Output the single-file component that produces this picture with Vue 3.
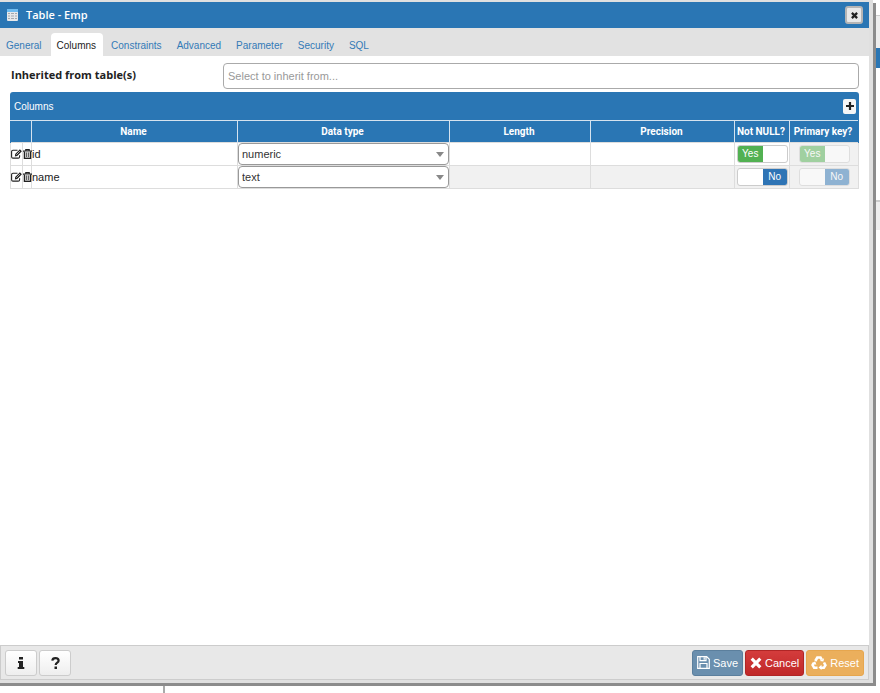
<script setup>
import { ref } from 'vue'

const tabs = ['General', 'Columns', 'Constraints', 'Advanced', 'Parameter', 'Security', 'SQL']
const active = ref('Columns')
const inherit = ref('')
const rows = ref([
  { name: 'id', type: 'numeric', sized: true, notNull: true, primary: true },
  { name: 'name', type: 'text', sized: false, notNull: false, primary: false },
])
</script>

<template>
  <div class="desktop">
    <main class="dialog">
      <header class="titlebar">
        <svg class="table-icon" viewBox="0 0 11 12" aria-hidden="true">
          <rect x="0" y="0" width="11" height="12" rx="1" fill="#e6e8ea" />
          <rect x="0" y="0" width="11" height="3" fill="#6fbcf0" />
          <path d="M1 4.500h2M4 4.500h3M8 4.500h2M1 7h2M4 7h3M8 7h2M1 9.500h2M4 9.500h3M8 9.500h2" stroke="#a3a9ae" />
        </svg>
        <h1>Table - Emp</h1>
        <button class="close" type="button" aria-label="Close">
          <svg viewBox="0 0 8 8" aria-hidden="true"><path d="M1 1l6 6M7 1l-6 6" stroke="#222" stroke-width="2.6" /></svg>
        </button>
      </header>

      <nav class="tabs">
        <a v-for="t in tabs" :key="t" href="#" :class="{ active: t === active }" @click.prevent="active = t">{{ t }}</a>
      </nav>

      <section class="content">
        <div class="field">
          <label for="inherit">Inherited from table(s)</label>
          <input id="inherit" v-model="inherit" type="text" placeholder="Select to inherit from..." />
        </div>

        <div class="grid">
          <div class="grid-head">
            <h2>Columns</h2>
            <button class="add" type="button" aria-label="Add column">
              <svg viewBox="0 0 8 8" aria-hidden="true"><path d="M4 0v8M0 4h8" stroke="#222" stroke-width="2.2" /></svg>
            </button>
          </div>
          <table>
            <colgroup>
              <col class="c-edit" /><col class="c-delete" /><col /><col class="c-type" />
              <col class="c-len" /><col class="c-prec" /><col class="c-null" /><col class="c-key" />
            </colgroup>
            <thead>
              <tr>
                <th colspan="2"></th>
                <th>Name</th>
                <th>Data type</th>
                <th>Length</th>
                <th>Precision</th>
                <th>Not NULL?</th>
                <th>Primary key?</th>
              </tr>
            </thead>
            <tbody>
              <tr v-for="r in rows" :key="r.name">
                <td class="icon-cell">
                  <button type="button" :aria-label="'Edit ' + r.name">
                    <svg width="11" height="10" viewBox="0 0 11 10" aria-hidden="true">
                      <path d="M6.500 1.300H2A1.400 1.400 0 0 0 .6 2.700v5A1.400 1.400 0 0 0 2 9.100h5.200a1.400 1.400 0 0 0 1.400-1.400V6.200" fill="none" stroke="#222" stroke-width="1.100" />
                      <path d="M3.900 7.400l.3-2.400L8.900.3l2 1.900L6.200 7z" fill="#222" />
                      <path d="M5.300 5.700L8.900 2.100" stroke="#fff" stroke-width=".7" />
                    </svg>
                  </button>
                </td>
                <td class="icon-cell">
                  <button type="button" :aria-label="'Delete ' + r.name">
                    <svg width="9" height="10" viewBox="0 0 9 10" aria-hidden="true">
                      <path d="M0 2.100h9M2.800 2V.7h3.400V2" fill="none" stroke="#222" stroke-width="1.200" />
                      <path d="M1.400 2.500v6.800h6.200V2.500" fill="#ccc" stroke="#222" stroke-width="1.300" />
                      <path d="M3.500 3.500v4.500M5.500 3.500v4.500" stroke="#444" stroke-width=".8" />
                    </svg>
                  </button>
                </td>
                <td>{{ r.name }}</td>
                <td>
                  <div class="select">
                    <select v-model="r.type" :aria-label="'Data type of ' + r.name">
                      <option>numeric</option>
                      <option>text</option>
                    </select>
                  </div>
                </td>
                <td :class="{ off: !r.sized }"></td>
                <td :class="{ off: !r.sized }"></td>
                <td :class="{ off: !r.sized }">
                  <label class="switch">
                    <input v-model="r.notNull" type="checkbox" :aria-label="r.name + ' not null'" />
                    <span class="yes">{{ r.notNull ? 'Yes' : '' }}</span>
                    <span class="no">{{ r.notNull ? '' : 'No' }}</span>
                  </label>
                </td>
                <td class="off key">
                  <label class="switch disabled">
                    <input v-model="r.primary" type="checkbox" disabled :aria-label="r.name + ' primary key'" />
                    <span class="yes">{{ r.primary ? 'Yes' : '' }}</span>
                    <span class="no">{{ r.primary ? '' : 'No' }}</span>
                  </label>
                </td>
              </tr>
            </tbody>
          </table>
        </div>
      </section>

      <footer class="footer">
        <button class="btn plain" type="button" aria-label="Information">
          <svg width="8" height="12" viewBox="0 0 8 12" aria-hidden="true">
            <path d="M2 0h4v2.500H2zM1 4h5v6h1.300v2H.7v-2H2V6H1z" fill="#222" />
          </svg>
        </button>
        <button class="btn plain" type="button" aria-label="Help">
          <svg width="9" height="12" viewBox="0 0 9 12" aria-hidden="true">
            <path d="M1.300 3.700C1.500 2 2.700 1.200 4.400 1.200c1.900 0 3.200 1 3.200 2.500C7.600 5.700 4.700 5.600 4.700 8" fill="none" stroke="#222" stroke-width="2.200" />
            <path d="M3.500 9.500h2.500V12H3.500z" fill="#222" />
          </svg>
        </button>
        <span class="spacer"></span>
        <button class="btn save" type="button">
          <svg width="13" height="13" viewBox="0 0 13 13" fill="none" stroke="#fff" stroke-width="1.200" aria-hidden="true">
            <path d="M.7.7h9l2.600 2.600v9H.7zM3 .7v4h6v-4M3 12.300V7.500h7v4.800" /><path d="M7.200 1.200v2.500" />
          </svg>
          Save
        </button>
        <button class="btn cancel" type="button">
          <svg width="12" height="12" viewBox="0 0 12 12" aria-hidden="true"><path d="M1.700 1.700l8.600 8.600M10.300 1.700l-8.600 8.600" stroke="#fff" stroke-width="3.200" /></svg>
          Cancel
        </button>
        <button class="btn reset" type="button">
          <svg width="16" height="14" viewBox="0 0 16 14" fill="none" stroke="#fff" stroke-width="2.600" aria-hidden="true">
            <path d="M4.300 5L6.300 1.500h3.200l1.300 2.200M13 6.500l1.400 2.600-1.600 2.700H9.500M6.500 11.800H3.200L1.600 9.100l1.300-2.300" />
            <path d="M8.700 4.900l3.700.6.700-3.300zM10.500 8.800v5.200L7.500 11.600zM.6 7.600L4.200 5.200l1.200 3.600z" fill="#fff" stroke="none" />
          </svg>
          Reset
        </button>
      </footer>
    </main>
    <aside class="behind-right">
      <i class="notch"></i><i class="pale"></i><i class="blue"></i><i class="gap"></i><i class="grey"></i>
    </aside>
    <div class="behind-bottom"><i></i></div>
  </div>
</template>

<style>
body { margin: 0; background: #fff; }
</style>

<style scoped>
* { box-sizing: border-box; }
.desktop {
  display: grid;
  grid-template-columns: 1fr 4px;
  grid-template-rows: 1fr 7px;
  min-height: 100vh;
  font-family: "Liberation Sans", Arial, sans-serif;
  font-size: 10px;
  color: #222;
}
.dialog {
  display: flex;
  flex-direction: column;
  min-width: 0;
  border: solid #e0e0e0;
  border-width: 2px 4px 3px 0;
  margin: 0 3px 3px 0;
  box-shadow: 0 3px 0 #8c8c8c, 3px 3px 0 #8c8c8c;
  background: #fff;
}
.titlebar {
  display: flex;
  align-items: center;
  height: 26px;
  padding: 0 6px 0 7px;
  background: #2a76b4;
}
.table-icon { width: 11px; height: 12px; }
h1 { flex: 1; margin: 0 0 0 8px; padding-bottom: 2px; font: 600 11px "Open Sans", sans-serif; color: #fff; }
.close, .add {
  display: flex;
  align-items: center;
  justify-content: center;
  padding: 0;
  border-radius: 3px;
}
.close { width: 18px; height: 18px; border: 2px solid #b5b5b5; background: #e8e8e8; }
.close svg { width: 7px; height: 7px; }
.add { width: 13px; height: 15px; border: 0; border-radius: 2px; background: #f6f6f6; }
.add svg { width: 8px; height: 8px; }
.tabs {
  display: flex;
  align-items: flex-end;
  gap: 2px;
  height: 28px;
  background: #e2e2e2;
}
.tabs a {
  height: 23px;
  padding: 3px 7px 0 6px;
  line-height: 20px;
  color: #337ab7;
  text-decoration: none;
  border-radius: 4px 4px 0 0;
}
.tabs a.active { background: #fff; color: #222; }
.content { flex: 1; padding: 7px 10px 0 10px; }
.field { display: grid; grid-template-columns: 213px 1fr; margin-bottom: 3px; }
.field label { padding-left: 1px; font: 700 11px/24px "Open Sans", sans-serif; }
.field input {
  width: 100%;
  height: 26px;
  padding: 0 4px;
  border: 1px solid #aaa;
  border-radius: 4px;
  font: 11px "Liberation Sans", Arial, sans-serif;
}
.field input::placeholder { color: #999; }
.grid-head {
  display: flex;
  align-items: center;
  justify-content: space-between;
  height: 28px;
  padding: 0 3px 0 4px;
  background: #2a76b4;
  border-radius: 3px 3px 0 0;
}
h2 { margin: 0; font-size: 10px; font-weight: 400; color: #fff; }
table { width: 100%; border-collapse: collapse; table-layout: fixed; }
.c-edit { width: 12px; }
.c-delete { width: 9px; }
.c-type { width: 212px; }
.c-len { width: 141px; }
.c-prec { width: 144px; }
.c-null { width: 55px; }
.c-key { width: 69px; }
th {
  height: 22px;
  padding: 0 2px 0 0;
  background: #2a76b4;
  border: solid #d5e3ef;
  border-width: 1px 1px 0 1px;
  color: #fff;
  font: 700 10px Roboto, sans-serif;
  white-space: nowrap;
}
th:first-child { border-left-color: #2a76b4; }
th:last-child { border-right-color: #2a76b4; }
td { height: 23px; padding: 0; border: 1px solid #ddd; font-size: 11px; }
td.off { background: #f1f1f1; }
.icon-cell button { display: flex; padding: 0; border: 0; background: none; }
.icon-cell svg { flex: none; }
.select { position: relative; }
.select::after {
  content: "";
  position: absolute;
  right: 5px;
  top: 9px;
  border: solid transparent;
  border-width: 5px 4px 0;
  border-top-color: #888;
  pointer-events: none;
}
select {
  display: block;
  appearance: none;
  width: 100%;
  height: 22px;
  padding: 0 3px;
  border: 1px solid #999;
  border-radius: 4px;
  background: #fff;
  color: #333;
  font: 11px "Liberation Sans", Arial, sans-serif;
}
.switch {
  position: relative;
  display: flex;
  width: 51px;
  height: 18px;
  margin-left: 2px;
  border: 1px solid #ccc;
  border-radius: 3px;
  overflow: hidden;
  background: #fff;
  color: #fff;
  font-size: 10px;
  line-height: 16px;
  text-align: center;
}
.switch input { position: absolute; opacity: 0; margin: 0; }
.switch span { flex: 1; }
.yes:not(:empty) { background: #52b152; }
.no:not(:empty) { background: #2e74b5; }
.switch.disabled { opacity: 0.5; }
.key .switch { margin-left: 9px; }
.footer {
  display: flex;
  align-items: center;
  gap: 2px;
  height: 35px;
  padding: 0 4px;
  background: #e8e8e8;
  border: 1px solid #ccc;
}
.spacer { flex: 1; }
.btn {
  display: flex;
  align-items: center;
  justify-content: center;
  gap: 3px;
  height: 26px;
  padding: 0 4px;
  border: 1px solid #ccc;
  border-radius: 3px;
  color: #fff;
  font: 11px "Liberation Sans", Arial, sans-serif;
}
.plain { width: 32px; background: linear-gradient(#fff, #eee); }
.save { background: #6a8fae; border-color: #5b7f9d; }
.cancel { background: linear-gradient(#d43c3c, #c02828); border-color: #b02525; }
.reset { background: #ebaf5c; border-color: #e6a64e; }
.behind-right { display: flex; flex-direction: column; }
.notch { height: 16px; border-bottom: 1px solid #ccc; }
.pale { height: 32px; background: #eee; }
.blue { height: 20px; background: #2a76b4; }
.gap { height: 132px; }
.grey { height: 30px; background: #eee; border-top: 2px solid #ccc; }
.behind-bottom { grid-column: 1 / -1; display: grid; grid-template-columns: 163px 2px; }
.behind-bottom i { grid-column: 2; background: #aaa; }
</style>
